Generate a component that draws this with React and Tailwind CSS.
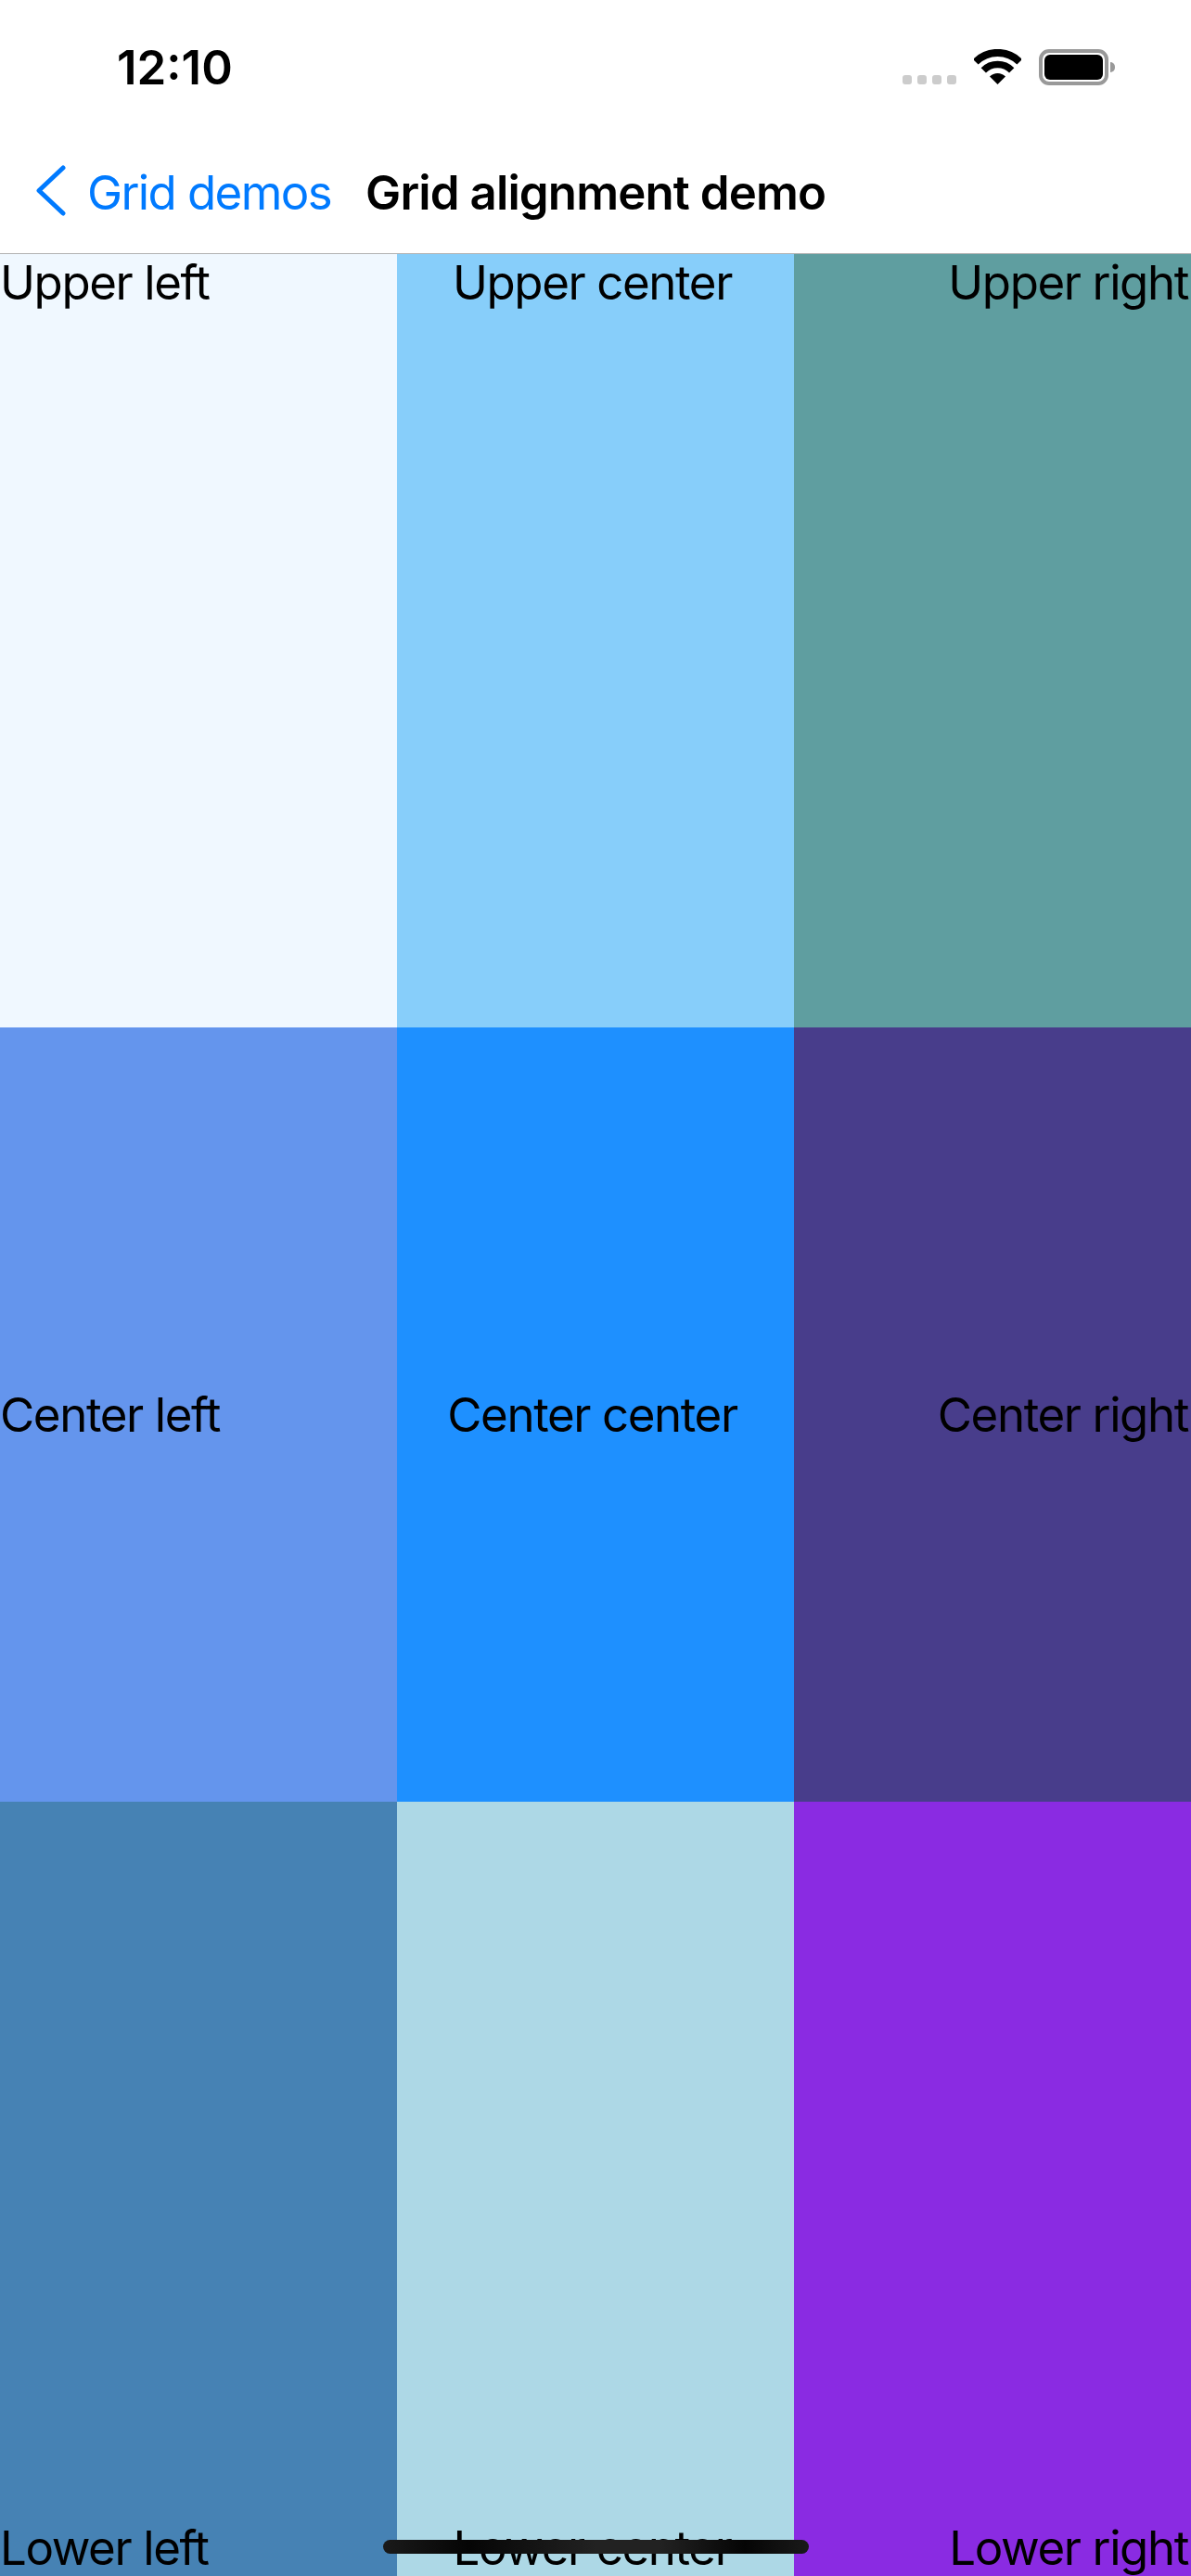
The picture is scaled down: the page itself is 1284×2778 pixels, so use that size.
const cells = [
  { label: 'Upper left', bg: 'bg-[#f0f8ff]', place: 'items-start justify-start' },
  { label: 'Upper center', bg: 'bg-[#87cefa]', place: 'items-start justify-center pr-[7px]' },
  { label: 'Upper right', bg: 'bg-[#5f9ea0]', place: 'items-start justify-end pr-[3px]' },
  { label: 'Center left', bg: 'bg-[#6495ed]', place: 'items-center justify-start' },
  { label: 'Center center', bg: 'bg-[#1e90ff]', place: 'items-center justify-center pr-[7px]' },
  { label: 'Center right', bg: 'bg-[#483d8b]', place: 'items-center justify-end pr-[3px]' },
  { label: 'Lower left', bg: 'bg-[#4682b4]', place: 'items-end justify-start' },
  { label: 'Lower center', bg: 'bg-[#add8e6]', place: 'items-end justify-center pr-[7px]' },
  { label: 'Lower right', bg: 'bg-[#8a2be2]', place: 'items-end justify-end pr-[3px]' },
];

const WifiIcon = () => (
  <svg width="51" height="38" viewBox="0 0 51 38" fill="none">
    <path d="M1.8 13.7 A33.5 33.5 0 0 1 49.2 13.7" stroke="#000" strokeWidth="8" />
    <path d="M10.3 22.8 A21.5 21.5 0 0 1 40.7 22.8" stroke="#000" strokeWidth="7.5" />
    <path d="M25.5 38 L17 29.5 A12 12 0 0 1 34 29.5 Z" fill="#000" />
  </svg>
);

const SignalDots = () => (
  <div className="flex gap-[6px] self-end mb-[1px]">
    {[0, 1, 2, 3].map(i => (
      <div key={i} className="w-[10px] h-[10px] rounded-[3px] bg-[#cccccc]" />
    ))}
  </div>
);

const Battery = () => (
  <div className="flex items-center gap-[2px]">
    <div className="w-[75px] h-[39px] rounded-[11px] border-[4px] border-[#999999] p-[2px]">
      <div className="w-full h-full rounded-[6px] bg-black" />
    </div>
    <div className="w-[5px] h-[11px] rounded-r-full bg-[#999999]" />
  </div>
);

const App = () => {
  return (
    <div className="relative w-full h-[2778px] flex flex-col bg-white text-black font-['Inter',sans-serif] tracking-[-1.4px] overflow-hidden">
      <div className="h-[273px] shrink-0 flex flex-col">
        <div className="h-[150px] flex items-start justify-between pt-[53px] pl-[126px] pr-[82px]">
          <span className="text-[51px] leading-[40px] font-semibold tracking-[0px]">12:10</span>
          <div className="flex items-start">
            <SignalDots />
            <div className="ml-[19px] mr-[19px]"><WifiIcon /></div>
            <Battery />
          </div>
        </div>
        <div className="flex items-center h-[123px] pb-[9px] pl-[39px]">
          <svg width="32" height="55" viewBox="0 0 32 55" fill="none" className="shrink-0 -mt-[3px]">
            <path d="M29 3 L3 27.5 L29 52" stroke="#007aff" strokeWidth="5" strokeLinecap="round" strokeLinejoin="round" />
          </svg>
          <span className="ml-[23px] text-[51px] leading-none tracking-[-1.6px] text-[#007aff]">Grid demos</span>
          <span className="ml-[37px] text-[51px] leading-none font-semibold tracking-[-0.9px]">Grid alignment demo</span>
        </div>
      </div>
      <div className="h-px shrink-0 bg-black/30" />
      <div className="flex-1 grid grid-cols-3 grid-rows-[834px_835px_835px]">
        {cells.map(cell => (
          <div key={cell.label} className={`flex ${cell.bg} ${cell.place}`}>
            <span className="text-[51px] leading-[61px] whitespace-nowrap">{cell.label}</span>
          </div>
        ))}
      </div>
      <div className="absolute left-[413px] top-[2739px] w-[459px] h-[15px] rounded-full bg-[linear-gradient(90deg,#1a1a1a_0%,#050505_20%,#222222_50%,#222222_65%,#050505_85%,#1a1a1a_100%)]" />
    </div>
  );
};

export default App;
